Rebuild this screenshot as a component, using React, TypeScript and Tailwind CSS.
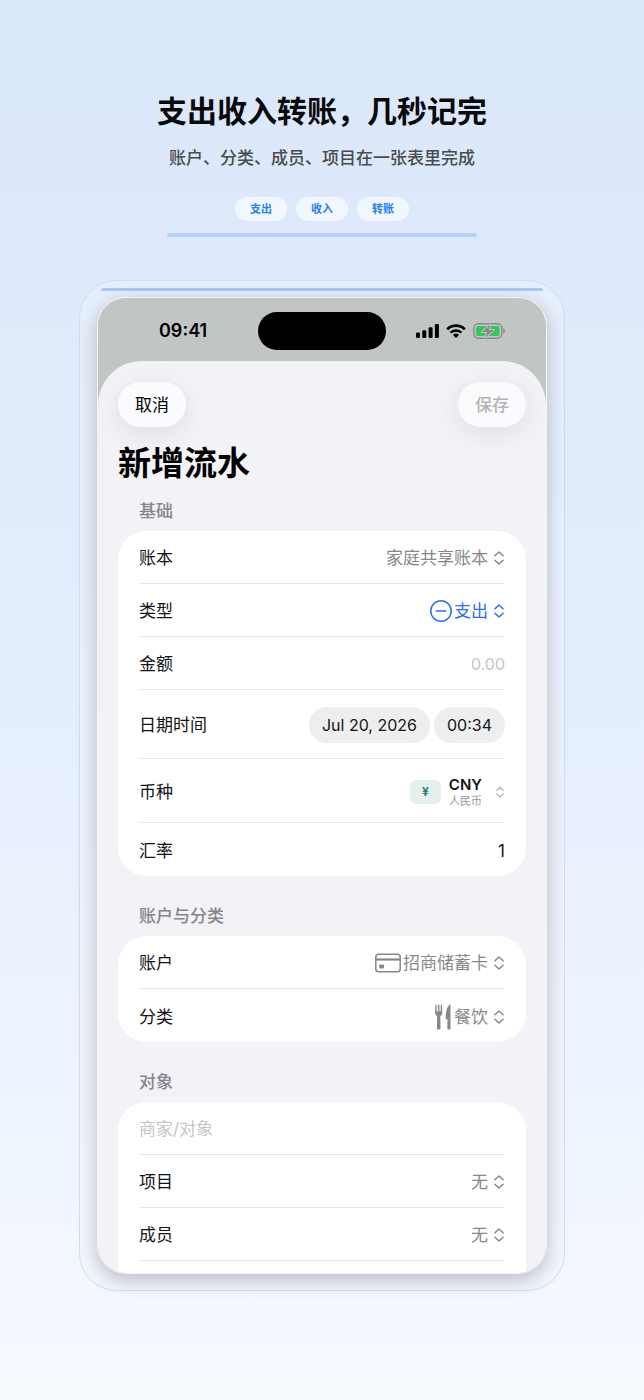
import type { ReactNode } from 'react';

const modes = ['支出', '收入', '转账'];

function UpDown({ small = false }: { small?: boolean }) {
  return (
    <svg
      viewBox="0 0 10 14"
      className={small ? 'h-3 w-2 shrink-0' : 'h-3.5 w-2.5 shrink-0'}
      fill="none"
      stroke="currentColor"
      strokeWidth="1.5"
      strokeLinecap="round"
      strokeLinejoin="round"
      aria-hidden="true"
    >
      <path d="M.9 4.8 5 1l4.1 3.8M.9 9.2 5 13l4.1-3.8" />
    </svg>
  );
}

function SignalIcon() {
  return (
    <svg viewBox="0 0 23 14" className="h-3.5 w-[23px]" aria-hidden="true">
      <rect x="0" y="8.6" width="4" height="5.4" rx="1.2" />
      <rect x="6.3" y="6.2" width="4" height="7.8" rx="1.2" />
      <rect x="12.6" y="3.2" width="4" height="10.8" rx="1.2" />
      <rect x="18.9" y="0" width="4" height="14" rx="1.2" />
    </svg>
  );
}

function WifiIcon() {
  return (
    <svg viewBox="0 0 20 14" className="h-3.5 w-5" fill="none" stroke="black" aria-hidden="true">
      <path d="M1.2 5.2a12.600 12.600 0 0 1 17.600 0" strokeWidth="2.6" />
      <path d="M4.5 8.7a7.900 7.900 0 0 1 11 0" strokeWidth="2.5" />
      <path d="M10 14 7 11a4.300 4.300 0 0 1 6 0z" fill="black" stroke="none" />
    </svg>
  );
}

function BatteryIcon() {
  return (
    <svg viewBox="0 0 32 16" className="h-4 w-8" aria-hidden="true">
      <rect x="0.8" y="0.8" width="28" height="14.4" rx="4.6" fill="none" stroke="#868b89" strokeWidth="1.4" />
      <path d="M30.2 5.500c1.300.3 1.800 1.300 1.800 2.500s-.5 2.200-1.800 2.500z" fill="#868b89" />
      <rect x="3" y="3" width="23.6" height="10" rx="2.6" fill="#34c759" />
      <path
        d="M17.600 1.600 9 9h5.200l-2 5.400L20.800 7h-5.200z"
        fill="#868b89"
        stroke="#c1c6c4"
        strokeWidth="2"
        strokeLinejoin="round"
        paintOrder="stroke"
      />
    </svg>
  );
}

function MinusCircle() {
  return (
    <svg viewBox="0 0 22 22" className="size-[22px] shrink-0" fill="none" stroke="currentColor" strokeWidth="1.5" aria-hidden="true">
      <circle cx="11" cy="11" r="10.2" />
      <path d="M6.200 11h9.600" strokeLinecap="round" />
    </svg>
  );
}

function CardIcon() {
  return (
    <svg viewBox="0 0 26 20" className="h-5 w-[26px] shrink-0" fill="none" stroke="currentColor" aria-hidden="true">
      <rect x="0.8" y="1.3" width="24.4" height="17.4" rx="2.8" strokeWidth="1.5" />
      <path d="M1 6.500h24" strokeWidth="2.2" />
      <rect x="4.2" y="11.4" width="4.8" height="4" rx="1" fill="currentColor" stroke="none" />
    </svg>
  );
}

function ForkKnifeIcon() {
  return (
    <svg viewBox="0 0 17 26" className="h-[26px] w-[17px] shrink-0" fill="currentColor" aria-hidden="true">
      <path d="M.4 1.200Q.5.500 1 .5t.6.700v6h1.300v-6Q3 .5 3.700.5t.7.700v6h1.300v-6Q5.800.5 6.400.5t.6.700l.3 7.600c0 1.700-.7 2.600-2 3.200l.2 11.900c0 1-.7 1.600-1.800 1.600s-1.800-.6-1.800-1.600L2.100 12C.8 11.400.1 10.500.1 8.800z" />
      <path d="M15.500 1.200v22.700c0 1-.6 1.600-1.600 1.600s-1.600-.6-1.600-1.600l.2-8.100-1.500-1.100c-.3-.2-.4-.6-.4-1.100.1-5.600 1.200-10 3.500-12.700.7-.7 1.400-.5 1.400.3z" />
    </svg>
  );
}

function Row({
  id,
  label,
  size = 'h-[53px]',
  last = false,
  children,
}: {
  id: string;
  label: string;
  size?: string;
  last?: boolean;
  children: ReactNode;
}) {
  return (
    <div className={`flex items-center justify-between gap-4 pt-0.5 ${size} ${last ? '' : 'border-b border-[#e6e6e7]'}`}>
      <label htmlFor={id} className="shrink-0">
        {label}
      </label>
      {children}
    </div>
  );
}

function Picker({
  id,
  value,
  icon,
  color = 'text-[#88888b]',
}: {
  id: string;
  value: string;
  icon?: ReactNode;
  color?: string;
}) {
  return (
    <div className={`flex items-center pr-px ${color}`}>
      {icon}
      <select id={id} className="field-sizing-content mr-1.5 ml-0.5 appearance-none bg-transparent outline-none">
        <option>{value}</option>
      </select>
      <UpDown />
    </div>
  );
}

function SectionTitle({ children }: { children: ReactNode }) {
  return <h3 className="flex h-10 items-center px-[21px] font-medium text-[#85858b]">{children}</h3>;
}

export default function App() {
  return (
    <main className="bg-linear-to-b from-[#dae7fa] via-[#e5eefd] to-[#f6faff] pt-[89px] pb-[109px] font-['Inter','Noto_Sans_CJK_SC',sans-serif] text-[17px] leading-6 text-[#141416]">
      <header className="flex flex-col items-center px-6 text-center">
        <h1 className="text-[30px] leading-[44px] font-bold text-[#0a0a0a]">支出收入转账，几秒记完</h1>
        <p className="mt-[13px] font-medium text-[#4a4b4d]">账户、分类、成员、项目在一张表里完成</p>
        <ul className="mt-[27px] flex gap-[9px]">
          {modes.map((mode) => (
            <li
              key={mode}
              className="flex h-6 w-[52px] items-center justify-center rounded-full bg-[#f2f7ff] text-[11px] font-bold text-[#2680eb]"
            >
              {mode}
            </li>
          ))}
        </ul>
      </header>
      <div className="mx-auto mt-3 h-1 w-[48%] rounded-full bg-[#b3d1fa]" />

      <div className="mx-[79px] mt-[43px] rounded-[38px] border border-[#c9dff9] bg-linear-to-b from-[#e6effc] to-[#f3f7fe] px-[17px] pt-[7px] pb-4">
        <div className="mx-1 h-[3px] rounded-full bg-[#a8c9f6]" />

        <div className="mt-1.5 flex aspect-[450/977] flex-col overflow-hidden rounded-[29px] border border-[#f3f5f7] bg-[#c1c6c4] shadow-[0_6px_20px_rgba(0,0,0,0.24)]">
          <div className="grid h-[63px] shrink-0 grid-cols-[1fr_128px_1fr] items-center pt-0.5">
            <span className="pl-[61px] text-lg font-semibold text-black">09:41</span>
            <span className="h-[38px] rounded-full bg-black" />
            <div className="flex items-center justify-end gap-[7px] pr-[41px]">
              <SignalIcon />
              <WifiIcon />
              <BatteryIcon />
            </div>
          </div>

          <form className="flex flex-1 flex-col rounded-t-[44px] bg-[#f2f2f7] px-5 pt-[21px]">
            <div className="flex justify-between">
              <button
                type="button"
                className="h-[45px] w-[68px] rounded-full bg-[#fbfbfe] text-black shadow-[0_6px_28px_rgba(0,0,0,0.09)]"
              >
                取消
              </button>
              <button
                type="button"
                disabled
                className="h-[45px] w-[68px] rounded-full bg-[#fbfbfe] font-medium text-[#b4b4b6] shadow-[0_6px_28px_rgba(0,0,0,0.09)]"
              >
                保存
              </button>
            </div>
            <h2 className="mt-3 text-[33px] leading-[48px] font-bold text-black">新增流水</h2>

            <div className="mt-1">
              <SectionTitle>基础</SectionTitle>
              <div className="rounded-[28px] bg-white px-[21px]">
                <Row id="book" label="账本">
                  <Picker id="book" value="家庭共享账本" />
                </Row>
                <Row id="type" label="类型">
                  <Picker id="type" value="支出" icon={<MinusCircle />} color="text-[#2b6ff5]" />
                </Row>
                <Row id="amount" label="金额">
                  <input
                    id="amount"
                    placeholder="0.00"
                    className="w-full min-w-0 bg-transparent text-right text-base outline-none placeholder:text-[#c5c5c7]"
                  />
                </Row>
                <Row id="date" label="日期时间" size="h-[69px]">
                  <div className="flex gap-1 text-base">
                    <button id="date" type="button" className="h-9 rounded-full bg-[#eeeeef] px-[13px]">
                      Jul 20, 2026
                    </button>
                    <button type="button" className="h-9 rounded-full bg-[#eeeeef] px-[13px]">
                      00:34
                    </button>
                  </div>
                </Row>
                <Row id="currency" label="币种" size="h-16">
                  <button id="currency" type="button" className="flex items-center pr-px">
                    <span className="flex h-6 w-[31px] items-center justify-center rounded-md bg-[#e5f0ee] text-xs font-bold text-[#1d7f76]">
                      ¥
                    </span>
                    <span className="mr-3.5 ml-2 flex flex-col items-end">
                      <span className="text-[15px] leading-[18px] font-semibold">CNY</span>
                      <span className="text-[11px] leading-[14px] text-[#98989b]">人民币</span>
                    </span>
                    <span className="text-[#b5b5b8]">
                      <UpDown small />
                    </span>
                  </button>
                </Row>
                <Row id="rate" label="汇率" last>
                  <input id="rate" defaultValue="1" className="w-full min-w-0 bg-transparent text-right outline-none" />
                </Row>
              </div>
            </div>

            <div className="mt-5">
              <SectionTitle>账户与分类</SectionTitle>
              <div className="rounded-[28px] bg-white px-[21px]">
                <Row id="account" label="账户">
                  <Picker id="account" value="招商储蓄卡" icon={<CardIcon />} />
                </Row>
                <Row id="category" label="分类" last>
                  <Picker id="category" value="餐饮" icon={<ForkKnifeIcon />} />
                </Row>
              </div>
            </div>

            <div className="mt-5 flex flex-1 flex-col">
              <SectionTitle>对象</SectionTitle>
              <div className="flex-1 rounded-t-[28px] bg-white px-[21px]">
                <div className="flex h-[53px] items-center border-b border-[#e6e6e7] pt-0.5">
                  <input
                    aria-label="商家/对象"
                    placeholder="商家/对象"
                    className="w-full bg-transparent outline-none placeholder:text-[#c5c5c7]"
                  />
                </div>
                <Row id="project" label="项目">
                  <Picker id="project" value="无" />
                </Row>
                <Row id="member" label="成员">
                  <Picker id="member" value="无" />
                </Row>
              </div>
            </div>
          </form>
        </div>
      </div>
    </main>
  );
}
